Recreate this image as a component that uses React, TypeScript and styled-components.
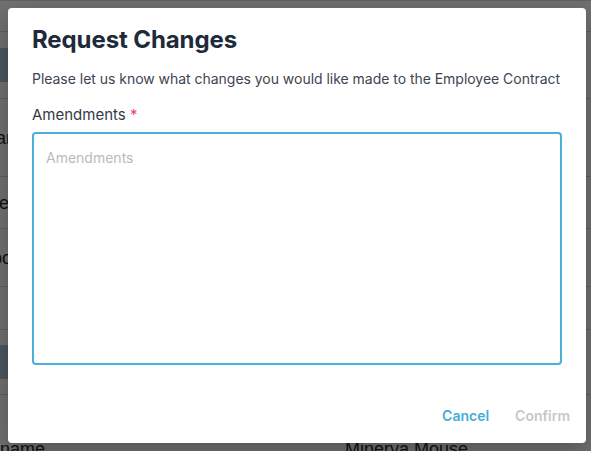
import React from 'react'
import styled, { createGlobalStyle } from 'styled-components'

const GlobalStyle = createGlobalStyle`
  html, body {
    margin: 0;
    padding: 0;
    background: #ffffff;
    font-family: Inter, "Noto Sans", "Liberation Sans", sans-serif;
  }
  * { box-sizing: border-box; }
`

const Page = styled.div`
  width: 591px;
  height: 451px;
  overflow: hidden;
  position: relative;
  background: #ffffff;
`

const DetailList = styled.div`
  display: flex;
  flex-direction: column;
  padding-top: 30px;
  border-top: 1px solid #dcdcdc;
`

const DetailRow = styled.div<{ $h: number; $top?: number }>`
  height: ${(p) => p.$h}px;
  display: flex;
  align-items: ${(p) => (p.$top ? 'flex-start' : 'center')};
  padding-top: ${(p) => p.$top ?? 0}px;
  justify-content: space-between;
  border-top: 1px solid #d6d6d6;
  font-family: "Liberation Sans", Arial, sans-serif;
  font-size: 18px;
  line-height: 20px;
  color: #2a2a2a;
  overflow: hidden;
`

const Label = styled.span<{ $shift: number }>`
  margin-left: ${(p) => p.$shift}px;
  white-space: nowrap;
`

const Avatar = styled.div`
  width: 40px;
  height: 34px;
  margin-left: -24px;
  border-radius: 10px;
  background: #a9c3d8;
`

const Value = styled.span`
  margin-right: 123px;
  white-space: nowrap;
`

const Overlay = styled.div`
  position: absolute;
  inset: 0;
  background: rgba(0, 0, 0, 0.56);
  display: flex;
  align-items: flex-start;
  justify-content: flex-start;
  padding: 8px 0 0 8px;
`

const Dialog = styled.div`
  width: 578px;
  height: 435px;
  background: #ffffff;
  border-radius: 4px;
  box-shadow: 0 8px 24px rgba(0, 0, 0, 0.25);
  padding: 17px 16px 0 24px;
  display: flex;
  flex-direction: column;
`

const Title = styled.h2`
  margin: 0;
  font-size: 24px;
  font-weight: 700;
  line-height: 30px;
  color: #202a3b;
  letter-spacing: -0.1px;
`

const Description = styled.p`
  margin: 14px 0 0 0;
  font-size: 14px;
  line-height: 20px;
  color: #3d4552;
  white-space: nowrap;
  letter-spacing: -0.03px;
`

const Field = styled.label`
  margin-top: 16px;
  display: flex;
  flex-direction: column;
  gap: 7px;
`

const FieldLabel = styled.span`
  font-size: 15px;
  line-height: 20px;
  color: #333a45;
`

const Required = styled.span`
  color: #e8475d;
`

const TextArea = styled.textarea`
  width: 530px;
  height: 233px;
  resize: none;
  border: 2px solid #48b0db;
  border-radius: 4px;
  padding: 14px 12px;
  font-family: inherit;
  font-size: 14px;
  line-height: 20px;
  color: #222;
  outline: none;
  &::placeholder {
    color: #b7bbc1;
  }
`

const Actions = styled.div`
  margin-top: 41px;
  display: flex;
  justify-content: flex-end;
  align-items: center;
  gap: 26px;
`

const ActionButton = styled.button<{ $disabled?: boolean }>`
  border: none;
  background: none;
  padding: 0;
  font-family: inherit;
  font-size: 14px;
  font-weight: 600;
  line-height: 20px;
  color: ${(p) => (p.$disabled ? '#c6c7c9' : '#45acd8')};
  cursor: ${(p) => (p.$disabled ? 'default' : 'pointer')};
`

const rows = [
  { h: 67, avatar: true },
  { h: 78, label: 'Plan', shift: -20 },
  { h: 52, label: 'Type', shift: -30 },
  { h: 58, label: 'Symbol', shift: -44 },
  { h: 43 },
  { h: 65, avatar: true },
  { h: 80, label: 'name', shift: 0, value: 'Minerva Mouse', top: 44 },
]

export default function App() {
  return (
    <Page>
      <GlobalStyle />
      <DetailList>
        {rows.map((r, i) => (
          <DetailRow key={i} $h={r.h} $top={r.top}>
            {r.avatar ? <Avatar /> : <Label $shift={r.shift ?? 0}>{r.label ?? ''}</Label>}
            {r.value && <Value>{r.value}</Value>}
          </DetailRow>
        ))}
      </DetailList>
      <Overlay>
        <Dialog role="dialog" aria-labelledby="dlg-title">
          <Title id="dlg-title">Request Changes</Title>
          <Description>
            Please let us know what changes you would like made to the Employee Contract
          </Description>
          <Field>
            <FieldLabel>
              Amendments <Required>*</Required>
            </FieldLabel>
            <TextArea placeholder="Amendments" autoFocus />
          </Field>
          <Actions>
            <ActionButton type="button">Cancel</ActionButton>
            <ActionButton type="button" $disabled>
              Confirm
            </ActionButton>
          </Actions>
        </Dialog>
      </Overlay>
    </Page>
  )
}
